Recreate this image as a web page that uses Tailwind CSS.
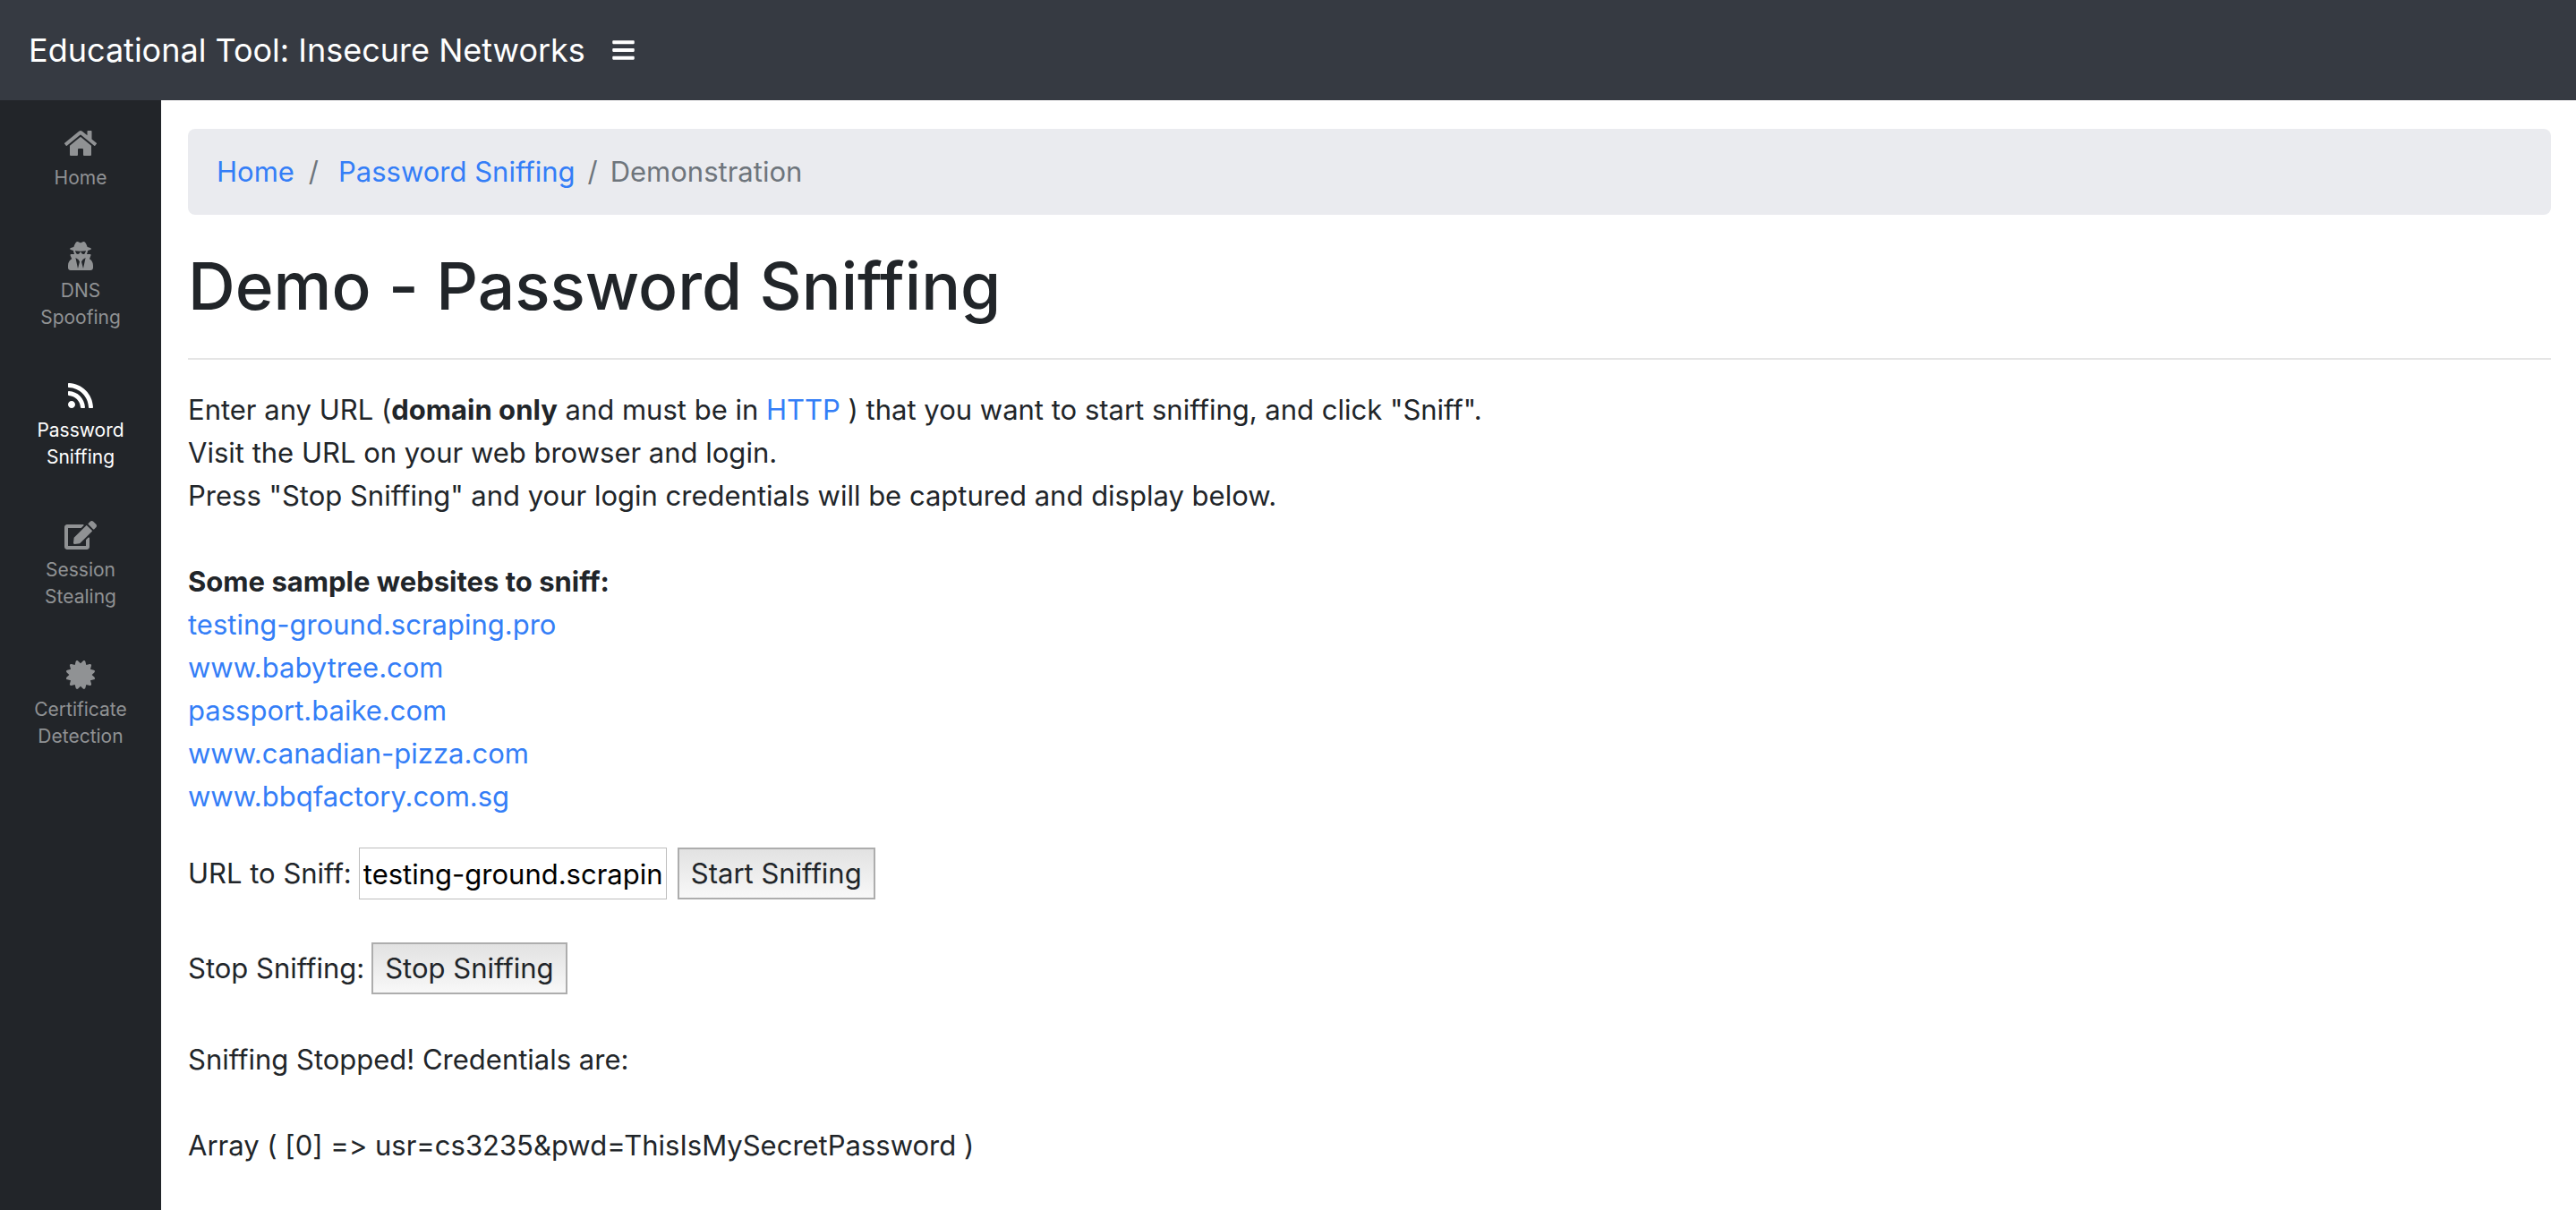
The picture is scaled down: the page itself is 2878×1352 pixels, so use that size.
<!DOCTYPE html>
<html lang="en">
<head>
<meta charset="utf-8">
<title>Educational Tool: Insecure Networks</title>
<script src="https://cdn.jsdelivr.net/npm/@tailwindcss/browser@4"></script>
</head>
<body class="flex min-h-screen flex-col bg-white font-['Inter',sans-serif] text-[31px] leading-[48px] text-[#212529] [font-variant-ligatures:no-contextual]">
<header class="flex h-28 items-center gap-[26px] bg-[#363a42] px-8">
  <a href="#" class="text-[36px] leading-[60px] text-white">Educational Tool: Insecure Networks</a>
  <button type="button" aria-label="Toggle sidebar" class="ml-1 text-white"><svg class="block h-7 w-[25px]" viewBox="0 0 448 512" fill="currentColor"><path d="M16 132h416c8.837 0 16-7.163 16-16V76c0-8.837-7.163-16-16-16H16C7.163 60 0 67.163 0 76v40c0 8.837 7.163 16 16 16zm0 160h416c8.837 0 16-7.163 16-16v-40c0-8.837-7.163-16-16-16H16c-8.837 0-16 7.163-16 16v40c0 8.837 7.163 16 16 16zm0 160h416c8.837 0 16-7.163 16-16v-40c0-8.837-7.163-16-16-16H16c-8.837 0-16 7.163-16 16v40c0 8.837 7.163 16 16 16z"/></svg></button>
</header>
<div class="flex flex-1">
  <nav class="w-[180px] shrink-0 bg-[#222529] text-center text-[21px] leading-[30px] text-[#909294]">
    <a href="#" class="flex flex-col items-center gap-2 px-4 pt-8 pb-6">
      <svg class="h-8 w-9" viewBox="0 0 576 512" fill="currentColor"><path d="M280.37 148.26L96 300.11V464a16 16 0 0 0 16 16l112.06-.29a16 16 0 0 0 15.92-16V368a16 16 0 0 1 16-16h64a16 16 0 0 1 16 16v95.64a16 16 0 0 0 16 16.05L464 480a16 16 0 0 0 16-16V300L295.67 148.26a12.19 12.19 0 0 0-15.3 0zM571.6 251.47L488 182.56V44.05a12 12 0 0 0-12-12h-56a12 12 0 0 0-12 12v72.61L318.47 43a48 48 0 0 0-61 0L4.34 251.47a12 12 0 0 0-1.6 16.9l25.5 31A12 12 0 0 0 45.15 301l235.22-193.74a12.19 12.19 0 0 1 15.3 0L530.9 301a12 12 0 0 0 16.9-1.6l25.5-31a12 12 0 0 0-1.7-16.93z"/></svg>
      <span>Home</span>
    </a>
    <a href="#" class="flex flex-col items-center gap-2 px-4 pt-8 pb-6">
      <svg class="h-8 w-7" viewBox="0 0 448 512" fill="currentColor"><path d="M383.9 308.3l23.9-62.6c4-10.5-3.7-21.7-15-21.7h-58.5c11-18.900 17.800-40.600 17.800-64v-.3c39.200-7.800 64-19.100 64-31.700 0-13.300-27.300-25.100-70.100-33-9.200-32.800-27-65.800-40.600-82.800-9.500-11.900-25.900-15.600-39.500-8.800l-27.600 13.800c-9 4.500-19.600 4.500-28.600 0L182.1 3.400c-13.600-6.800-30-3.100-39.500 8.800-13.500 17-31.400 50-40.600 82.800-42.700 7.900-70 19.700-70 33 0 12.600 24.800 23.900 64 31.700v.3c0 23.400 6.800 45.100 17.800 64H56.300c-11.500 0-19.200 11.700-14.700 22.300l25.800 60.200C27.300 329.800 0 372.700 0 422.400v44.800C0 491.900 20.100 512 44.800 512h358.400c24.700 0 44.800-20.100 44.800-44.800v-44.800c0-48.400-25.800-90.400-64.100-114.100zM176 480l-41.600-192 49.600 32 24 40-32 120zm96 0l-32-120 24-40 49.600-32L272 480zm41.700-298.500c-3.900 11.900-7 24.600-16.500 33.400-10.100 9.300-48 22.400-64-25-2.800-8.400-15.400-8.400-18.300 0-17 50.200-56 32.400-64 25-9.500-8.800-12.700-21.500-16.500-33.400-.8-2.500-6.300-5.700-6.300-5.800v-10.800c28.300 3.600 61 5.800 96 5.800s67.700-2.100 96-5.800v10.800c-.1.100-5.600 3.200-6.400 5.800z"/></svg>
      <span>DNS<br>Spoofing</span>
    </a>
    <a href="#" aria-current="page" class="flex flex-col items-center gap-2 px-4 pt-8 pb-6 text-white">
      <svg class="h-8 w-7" viewBox="0 0 448 512" fill="currentColor"><path d="M128.081 415.959c0 35.369-28.672 64.041-64.041 64.041S0 451.328 0 415.959s28.672-64.041 64.041-64.041 64.040 28.673 64.040 64.041zm175.660 47.250c-8.354-154.600-132.185-278.587-286.950-286.950C7.656 175.765 0 183.105 0 192.253v48.069c0 8.415 6.490 15.472 14.887 16.018 111.832 7.284 201.473 96.702 208.772 208.772.547 8.397 7.604 14.887 16.018 14.887h48.069c9.149.001 16.489-7.655 15.995-16.790zm144.249.288C439.596 229.677 251.465 40.445 16.503 32.010 7.473 31.686 0 38.981 0 48.016v48.068c0 8.625 6.835 15.645 15.453 15.999 191.179 7.839 344.627 161.316 352.465 352.465.353 8.618 7.373 15.453 15.999 15.453h48.068c9.034-.001 16.329-7.474 16.005-16.504z"/></svg>
      <span>Password<br>Sniffing</span>
    </a>
    <a href="#" class="flex flex-col items-center gap-2 px-4 pt-8 pb-6">
      <svg class="h-8 w-9" viewBox="0 0 576 512" fill="currentColor"><path d="M402.600 83.200l90.200 90.200c3.800 3.800 3.800 10 0 13.800L274.400 405.600l-92.800 10.300c-12.400 1.400-22.900-9.100-21.500-21.500l10.300-92.800L388.800 83.200c3.800-3.800 10-3.800 13.800 0zm162-22.900l-48.800-48.800c-15.200-15.200-39.900-15.200-55.200 0l-35.400 35.400c-3.800 3.800-3.800 10 0 13.800l90.200 90.200c3.800 3.800 10 3.800 13.800 0l35.400-35.400c15.200-15.300 15.200-40 0-55.200zM384 346.200V448H64V128h229.800c3.200 0 6.200-1.300 8.500-3.500l40-40c7.600-7.600 2.200-20.500-8.500-20.500H48C21.500 64 0 85.500 0 112v352c0 26.500 21.500 48 48 48h352c26.500 0 48-21.500 48-48V306.200c0-10.700-12.900-16-20.500-8.500l-40 40c-2.200 2.300-3.500 5.300-3.500 8.500z"/></svg>
      <span>Session<br>Stealing</span>
    </a>
    <a href="#" class="flex flex-col items-center gap-2 px-2 pt-8 pb-6">
      <svg class="size-8" viewBox="0 0 512 512" fill="currentColor"><path d="M458.622 255.920l45.985-45.005c13.708-12.977 7.316-36.039-10.664-40.339l-62.650-15.990 17.661-62.015c4.991-17.838-11.829-34.663-29.661-29.671l-61.994 17.667-15.984-62.671C337.085.197 313.765-6.276 300.990 7.228L256 53.570 211.011 7.229c-12.630-13.351-36.047-7.234-40.325 10.668l-15.984 62.671-61.995-17.667C74.870 57.907 58.056 74.738 63.046 92.572l17.661 62.015-62.650 15.990C.069 174.878-6.310 197.944 7.392 210.915l45.985 45.005-45.985 45.004c-13.708 12.977-7.316 36.039 10.664 40.339l62.650 15.990-17.661 62.015c-4.991 17.838 11.829 34.663 29.661 29.671l61.994-17.667 15.984 62.671c4.439 18.575 27.696 24.018 40.325 10.668L256 458.610l44.989 46.001c12.500 13.488 35.987 7.486 40.325-10.668l15.984-62.671 61.994 17.667c17.836 4.994 34.651-11.837 29.661-29.671l-17.661-62.015 62.650-15.990c17.987-4.302 24.366-27.367 10.664-40.339l-45.984-45.004z"/></svg>
      <span>Certificate<br>Detection</span>
    </a>
  </nav>
  <main class="flex-1 pt-8 pr-7 pb-12 pl-[30px]">
    <nav aria-label="Breadcrumb" class="rounded-lg bg-[#eaebef] px-8 py-6 text-[#6e757c]">
      <ol class="flex">
        <li><a href="#" class="text-[#347ef7]">Home</a></li>
        <li class="flex gap-[22px] pl-4"><span aria-hidden="true">/</span><a href="#" class="text-[#347ef7]">Password Sniffing</a></li>
        <li class="flex gap-3.5 pl-3.5" aria-current="page"><span aria-hidden="true">/</span>Demonstration</li>
      </ol>
    </nav>
    <h1 class="mt-8 text-[73px] leading-[96px] font-medium">Demo - Password Sniffing</h1>
    <hr class="my-8 border-t-2 border-[#e5e5e5]">
    <p>Enter any URL (<b>domain only</b> and must be in <a href="#" class="text-[#347ef7]">HTTP</a> ) that you want to start sniffing, and click "Sniff".<br>
      Visit the URL on your web browser and login.<br>
      Press "Stop Sniffing" and your login credentials will be captured and display below.</p>
    <p class="mt-12 font-bold">Some sample websites to sniff:</p>
    <ul class="text-[#347ef7]">
      <li><a href="#">testing-ground.scraping.pro</a></li>
      <li><a href="#">www.babytree.com</a></li>
      <li><a href="#">passport.baike.com</a></li>
      <li><a href="#">www.canadian-pizza.com</a></li>
      <li><a href="#">www.bbqfactory.com.sg</a></li>
    </ul>
    <form class="mt-8 flex h-15 items-center">
      <label for="url">URL to Sniff:</label>
      <input id="url" type="text" value="testing-ground.scraping.pro" class="ml-2 h-[58px] w-[344px] border border-[#bdbdbd] px-1 text-black">
      <button type="button" class="ml-3 h-[58px] border-2 border-[#adadad] bg-linear-to-b from-[#e2e2e2] to-[#f8f8f8] px-[13px] leading-[54px]">Start Sniffing</button>
    </form>
    <form class="mt-[46px] flex h-15 items-center gap-2">
      <label for="stop">Stop Sniffing:</label>
      <button id="stop" type="button" class="h-[58px] border-2 border-[#adadad] bg-linear-to-b from-[#e2e2e2] to-[#f8f8f8] px-[13px] leading-[54px]">Stop Sniffing</button>
    </form>
    <p class="mt-12">Sniffing Stopped! Credentials are:</p>
    <p class="mt-12">Array ( [0] =&gt; usr=cs3235&amp;pwd=ThisIsMySecretPassword )</p>
  </main>
</div>
</body>
</html>
